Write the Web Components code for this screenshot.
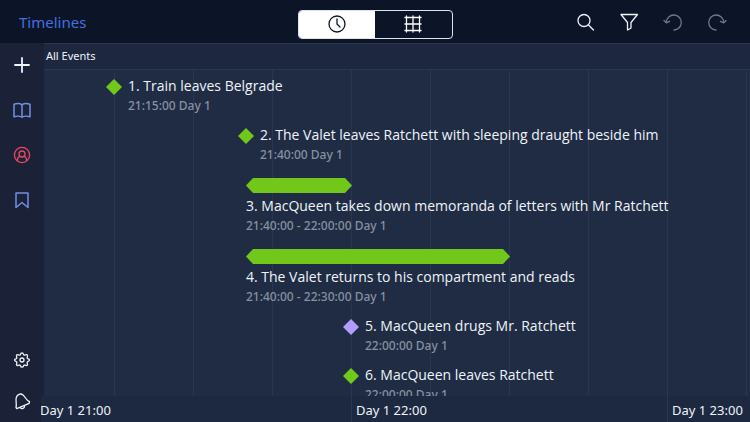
<!DOCTYPE html>
<html lang="en">
<head>
<meta charset="utf-8">
<meta name="viewport" content="width=device-width, initial-scale=1">
<title>Timelines</title>
<style>
html, body { height: 100%; margin: 0; }
body { background: #1f2c44; color: #f0f3f9; font-family: "Noto Sans", "Open Sans", sans-serif; overflow: hidden; }
</style>
</head>
<body>
<timeline-app></timeline-app>
<script>
const ICONS = {
  clock: '<circle cx="12" cy="12" r="8"/><path d="M12 7v5l3 3"/>',
  grid: '<path d="M5.5 4v16M12 4v16M18.5 4v16M4 5.5h16M4 12h16M4 18.5h16"/>',
  search: '<circle cx="11" cy="10.5" r="6"/><path d="M15.500 15l5 5"/>',
  filter: '<path d="M4 4.500h16.500l-6.500 8v5.500l-3.500 2v-7.500z"/>',
  undo: '<path d="M5.300 12a7.500 7.500 0 1 1 7.700 8"/><path d="M3 10.500l2.300 2.300 3.300-1.500"/>',
  redo: '<path d="M18.700 12a7.500 7.500 0 1 0-7.700 8"/><path d="M21 10.500l-2.300 2.300-3.300-1.500"/>',
  plus: '<path d="M12 5v14M5 12h14"/>',
  book: '<path d="M12 6.800c-1.500-1.200-5.500-1.300-8-.6v12.500c2.500-.8 6.500-.7 8 .6 1.500-1.300 5.500-1.400 8-.6v-12.500c-2.500-.7-6.500-.6-8 .6zM12 7v12"/>',
  person: '<circle cx="12" cy="12" r="7.600"/><circle cx="12" cy="11" r="3"/><path d="M7.200 17.700c.2-2.500 1.300-4 2.800-4.500M16.800 17.700c-.2-2.500-1.300-4-2.800-4.500"/>',
  bookmark: '<path d="M6 5h12v14.500l-6-5-6 5z"/>',
  gear: '<path d="M12 4.800q1.200 0 1.700 2 .5.400 1 .4 1.900-1 2.600-.2t-.2 2.600q.1.600.5 1 1.900.5 1.900 1.500t-1.900 1.600q-.4.400-.5 1 .9 1.800.2 2.500t-2.600-.2q-.5 0-1 .5-.5 1.700-1.700 1.700t-1.700-1.700q-.5-.5-1-.5-1.900.9-2.600.2t.2-2.500q-.1-.600-.5-1-1.900-.6-1.900-1.600t1.900-1.500q.4-.4.500-1-.9-1.800-.2-2.600t2.600.2q.5 0 1-.4.500-2 1.700-2z"/><circle cx="12" cy="12" r="2"/>',
  bell: '<path d="M6 18.500c1-3-.7-7 .3-10C7.200 5.300 10.600 4 13 6c2.500 2 2.800 5 6.500 6.700l-.3 1.600L6.800 19.600z"/><path d="M10.500 19c1.500 1.300 4 .3 4-1.600"/>'
};

const define = (name, html, setup) => {
  const template = document.createElement('template');
  template.innerHTML = html;
  customElements.define(name, class extends HTMLElement {
    connectedCallback() {
      if (this.shadowRoot) return;
      const root = this.attachShadow({ mode: 'open' });
      root.append(template.content.cloneNode(true));
      if (setup) setup(this, root);
    }
  });
};

define('line-icon', `
<style>
  :host { display: block; width: 24px; height: 24px; }
  svg { display: block; width: 100%; height: 100%; fill: none; stroke: currentColor; stroke-width: var(--stroke, 1.3); stroke-linejoin: round; stroke-linecap: round; }
</style>
<svg viewBox="0 0 24 24" aria-hidden="true"></svg>`,
(host, root) => { root.querySelector('svg').innerHTML = ICONS[host.getAttribute('name')]; });

define('icon-button', `
<style>
  :host { display: block; width: 44px; height: 44px; }
  button { width: 100%; height: 100%; padding: 0; border: 0; background: none; color: inherit; display: grid; place-items: center; cursor: pointer; }
</style>
<button type="button"></button>`,
(host, root) => {
  const icon = document.createElement('line-icon');
  icon.setAttribute('name', host.getAttribute('icon'));
  const button = root.querySelector('button');
  button.setAttribute('aria-label', host.getAttribute('label'));
  button.append(icon);
});

define('view-switch', `
<style>
  :host { display: flex; width: 155px; height: 29px; box-sizing: border-box; border: 1px solid #dfe4ec; border-radius: 4px; overflow: hidden; }
  button { flex: 1; padding: 0; border: 0; background: none; color: #fff; display: grid; place-items: center; cursor: pointer; }
  button[aria-pressed="true"] { background: #fff; color: #0c1527; }
</style>
<button type="button" aria-label="Timeline view" aria-pressed="true"><line-icon name="clock"></line-icon></button>
<button type="button" aria-label="Grid view" aria-pressed="false"><line-icon name="grid"></line-icon></button>`);

define('top-bar', `
<style>
  :host { display: grid; grid-template-columns: 1fr auto 1fr; align-items: center; height: 43px; padding: 0 11px 0 19px; background: #0c1527; box-sizing: border-box; }
  a { color: #4470e0; font-size: 15px; line-height: 20px; text-decoration: none; justify-self: start; }
  view-switch { margin: 4px 8px 0 0; }
  nav { display: flex; justify-content: flex-end; color: #eef1f7; }
  .off { color: #70788a; }
</style>
<a href="#timelines"><slot></slot></a>
<view-switch></view-switch>
<nav aria-label="Tools">
  <icon-button icon="search" label="Search"></icon-button>
  <icon-button icon="filter" label="Filter"></icon-button>
  <icon-button class="off" icon="undo" label="Undo"></icon-button>
  <icon-button class="off" icon="redo" label="Redo"></icon-button>
</nav>`);

define('side-bar', `
<style>
  :host { display: flex; flex-direction: column; gap: 1px; width: 44px; background: #1b2237; color: #f0f3f9; }
  .add { --stroke: 1.8; }
  .blue { color: #748de6; --stroke: 1.5; }
  .red { color: #ea4763; }
  .space { flex: 1; }
  .low { height: 40px; }
  .low:last-child { padding-bottom: 1px; }
</style>
<icon-button class="add" icon="plus" label="Add"></icon-button>
<icon-button class="blue" icon="book" label="Narrative"></icon-button>
<icon-button class="red" icon="person" label="Characters"></icon-button>
<icon-button class="blue" icon="bookmark" label="Bookmarks"></icon-button>
<div class="space"></div>
<icon-button class="low" icon="gear" label="Settings"></icon-button>
<icon-button class="low" icon="bell" label="Notifications"></icon-button>`);

/* start and end are minutes after 21:00. */
define('timeline-event', `
<style>
  :host { display: block; box-sizing: border-box; height: 49px; white-space: nowrap; color: #f0f3f9; }
  :host([end]) { height: 71px; padding-top: 3px; }
  .row { display: flex; }
  .mark { flex: none; background: var(--mark, #72c81a); }
  :host(:not([end])) .mark { width: 16px; height: 16px; margin: 2px 6px 0 -8px; clip-path: polygon(50% 0, 100% 50%, 50% 100%, 0 50%); }
  :host([end]) .row { flex-direction: column; }
  :host([end]) .mark { height: 15px; margin-bottom: 4px; clip-path: polygon(0 50%, 7px 0, calc(100% - 7px) 0, 100% 50%, calc(100% - 7px) 100%, 7px 100%); }
  .title { font-family: "Open Sans", "Noto Sans", sans-serif; font-size: 14px; line-height: 18px; }
  .time { font-size: 12px; line-height: 22px; font-weight: 500; color: #8790a1; }
</style>
<div class="row"><div class="mark"></div><div><div class="title"><slot></slot></div><div class="time"><slot name="time"></slot></div></div></div>`,
(host, root) => {
  const perMinute = 316 / 60;
  const start = +host.getAttribute('start');
  host.style.marginLeft = Math.round(start * perMinute) - 9 + 'px';
  if (host.hasAttribute('end')) root.querySelector('.mark').style.width = Math.ceil((host.getAttribute('end') - start) * perMinute) + 'px';
});

define('time-axis', `
<style>
  :host { display: flex; height: 26px; margin-left: -3px; overflow: hidden; background: #1c2940; }
  span { flex: none; box-sizing: border-box; width: 316px; padding-left: 4px; border-left: 1px solid #2a374f; font-size: 13px; line-height: 28px; white-space: nowrap; }
  span:first-of-type { margin-left: -6px; }
</style>
<span>Day 1 21:00</span><span>Day 1 22:00</span><span>Day 1 23:00</span>`);

define('timeline-app', `
<style>
  :host { display: grid; grid-template: auto 1fr / auto 1fr; height: 100vh; }
  top-bar { grid-column: 1 / -1; }
  main { display: flex; flex-direction: column; min-width: 0; min-height: 0; }
  h1 { margin: 0; padding-left: 2px; height: 27px; box-sizing: border-box; border: solid #29364d; border-width: 1px 0; background: #1d2840; font-size: 11px; line-height: 24px; font-weight: 400; }
  .events { flex: 1; min-height: 0; overflow: hidden; padding-top: 7px; background: repeating-linear-gradient(90deg, #29364d 0 1px, transparent 1px 79px) -9px 0 / calc(100% + 9px) 100% no-repeat #1f2c44; }
  .violet { --mark: #b19cff; }
</style>
<top-bar>Timelines</top-bar>
<side-bar></side-bar>
<main>
  <h1>All Events</h1>
  <div class="events">
    <timeline-event start="15">1. Train leaves Belgrade<span slot="time">21:15:00 Day 1</span></timeline-event>
    <timeline-event start="40">2. The Valet leaves Ratchett with sleeping draught beside him<span slot="time">21:40:00 Day 1</span></timeline-event>
    <timeline-event start="40" end="60">3. MacQueen takes down memoranda of letters with Mr Ratchett<span slot="time">21:40:00 - 22:00:00 Day 1</span></timeline-event>
    <timeline-event start="40" end="90">4. The Valet returns to his compartment and reads<span slot="time">21:40:00 - 22:30:00 Day 1</span></timeline-event>
    <timeline-event class="violet" start="60">5. MacQueen drugs Mr. Ratchett<span slot="time">22:00:00 Day 1</span></timeline-event>
    <timeline-event start="60">6. MacQueen leaves Ratchett<span slot="time">22:00:00 Day 1</span></timeline-event>
  </div>
  <time-axis></time-axis>
</main>`);
</script>
</body>
</html>
